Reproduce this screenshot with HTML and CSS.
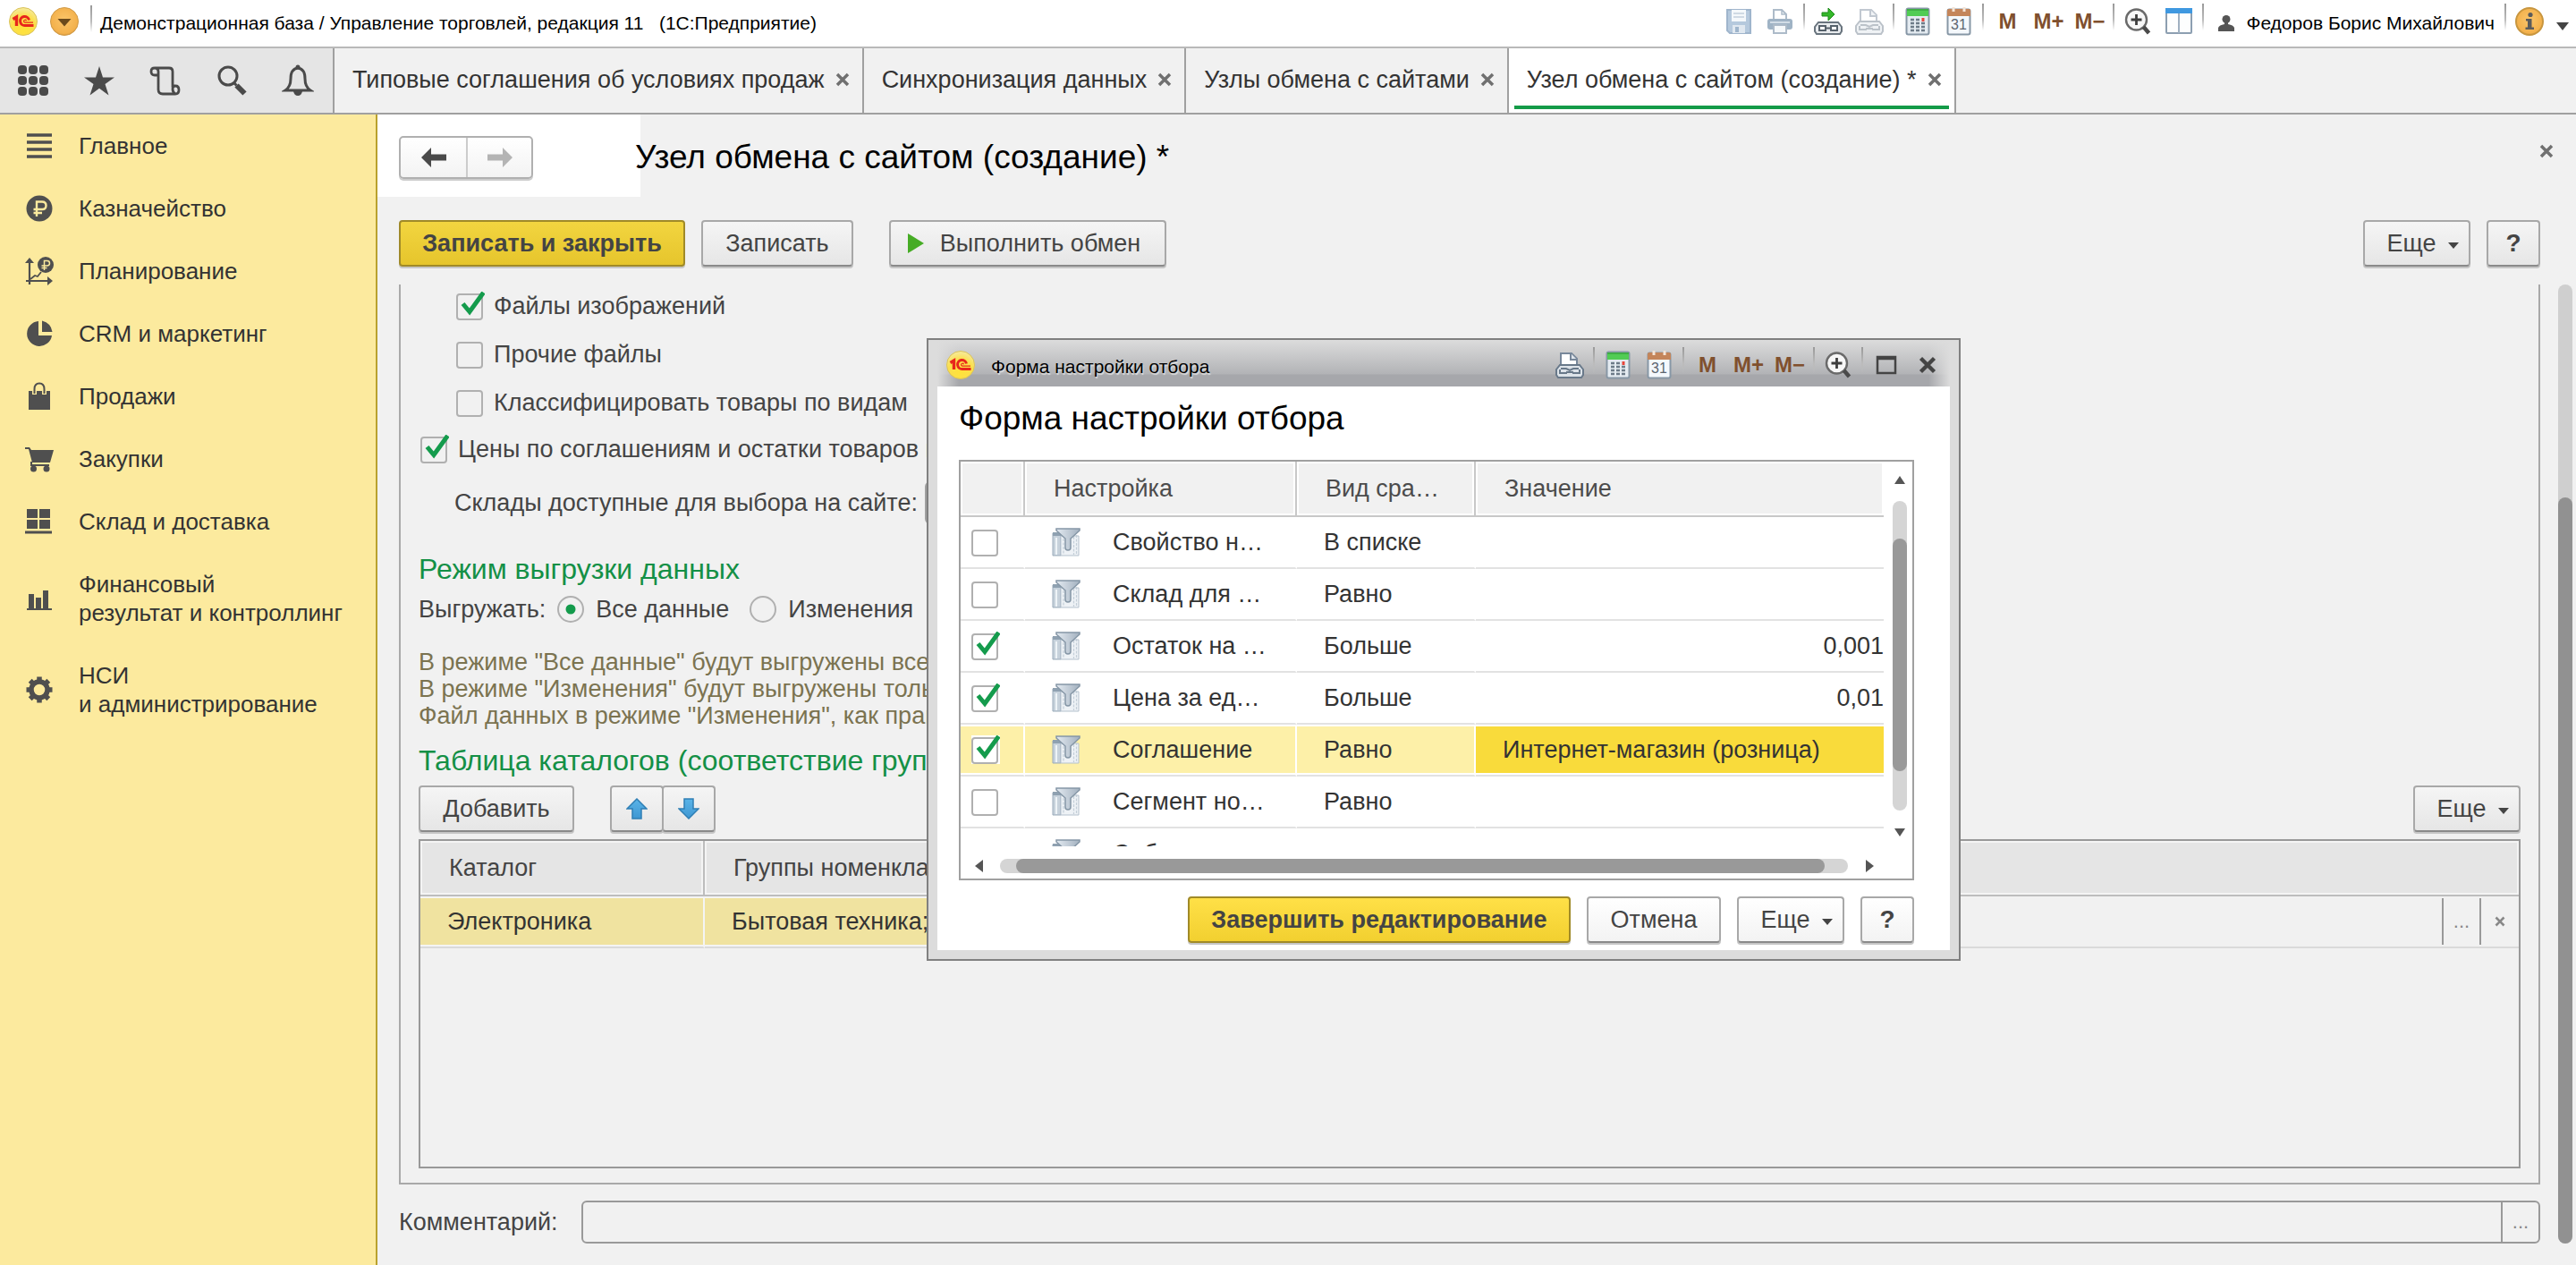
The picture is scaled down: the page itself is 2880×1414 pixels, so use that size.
FILE: index.html
```html
<!DOCTYPE html>
<html lang="ru">
<head>
<meta charset="utf-8">
<title>Узел обмена с сайтом (создание)</title>
<link rel="stylesheet" href="styles.css">
</head>
<body>

<svg class="sprite" aria-hidden="true">
  <defs>
    <radialGradient id="gold" cx="50%" cy="75%" r="75%">
      <stop offset="0" stop-color="#ffe23a"/><stop offset=".6" stop-color="#fbdf4c"/><stop offset="1" stop-color="#f6eba0"/>
    </radialGradient>
    <radialGradient id="amber" cx="50%" cy="45%" r="60%">
      <stop offset="0" stop-color="#fbc56a"/><stop offset=".8" stop-color="#f3b14c"/><stop offset="1" stop-color="#c98d35"/>
    </radialGradient>
    <linearGradient id="steel" x1="0" x2="1"><stop offset="0" stop-color="#e3eaf1"/><stop offset="1" stop-color="#a3b1bf"/></linearGradient>
    <linearGradient id="sky" x1="0" x2="0" y1="0" y2="1"><stop offset="0" stop-color="#5ab4e8"/><stop offset="1" stop-color="#3f97d2"/></linearGradient>
  </defs>
  <symbol id="i-logo" viewBox="0 0 32 32">
    <circle cx="16" cy="16" r="15.5" fill="url(#gold)" stroke="#d9c25a"/>
    <path d="M4.500 13.500L8.500 11v10" fill="none" stroke="#e8261c" stroke-width="3.400"/>
    <path d="M22.500 14.500a5 5 0 1 0-4.500 6h9.500" fill="none" stroke="#e8261c" stroke-width="3"/>
    <path d="M19.500 15.200a1.500 1.500 0 1 0-1.500 2h9" fill="none" stroke="#e8261c" stroke-width="1.200"/>
  </symbol>
  <symbol id="i-drop" viewBox="0 0 32 32">
    <circle cx="16" cy="16" r="15.500" fill="url(#amber)" stroke="#cf9a48"/>
    <path d="M8.500 13h15L16 21.500z" fill="#6b4a1c"/>
  </symbol>
  <symbol id="i-info" viewBox="0 0 32 32">
    <circle cx="16" cy="16" r="15" fill="url(#amber)" stroke="#c8963f" stroke-width="2"/>
    <circle cx="17" cy="8.500" r="2.600" fill="#5b5b5b"/>
    <path d="M12 13h6.500v9.500h2.500V25h-9.500v-2.500H14v-7h-2z" fill="#5b5b5b"/>
  </symbol>
  <symbol id="i-save" viewBox="0 0 32 32">
    <path d="M3 3h26v26H6l-3-3z" fill="#a9c0d8" stroke="#8fa9c4" stroke-width="2"/>
    <path d="M8 3h16v13H8z" fill="#f3f7fb"/><path d="M10 7h12M10 11h12" stroke="#b9c9d8" stroke-width="1.500"/>
    <path d="M9 20h14v9H9z" fill="#dbe5ee"/><path d="M12 22h4v6h-4z" fill="#8fa9c4"/>
  </symbol>
  <symbol id="i-print" viewBox="0 0 32 32">
    <path d="M9 14V3h9l5 5v6" fill="#fff" stroke="#9fb0c0" stroke-width="2"/><path d="M18 3v5h5" fill="none" stroke="#9fb0c0" stroke-width="1.500"/>
    <rect x="2" y="13" width="28" height="12" rx="3" fill="#8fa6bb"/><path d="M5 17h22" stroke="#c9d6e2" stroke-width="2"/>
    <path d="M9 20h14v9H9z" fill="#f5f8fb" stroke="#9fb0c0" stroke-width="2"/>
  </symbol>
  <symbol id="i-golink" viewBox="0 0 32 32">
    <path d="M9 6h7V1L23 8l-7 7v-5H9z" fill="#35b82a" stroke="#1d8a1a"/>
    <path d="M5 17h22l4 5v5l-2 3H3l-2-3v-5z" fill="#e8ebee" stroke="#69747e" stroke-width="2"/>
    <path d="M6 21h7v5H6zM19 21h7v5h-7zM12 23.500h8" fill="#fff" stroke="#56616b" stroke-width="2"/>
  </symbol>
  <symbol id="i-plink" viewBox="0 0 32 32">
    <path d="M6 17V3h12l6 6v8" fill="#fff" stroke="#77879a" stroke-width="2"/><path d="M17 3v7h7" fill="#dfe5ec" stroke="#77879a" stroke-width="2"/>
    <path d="M5 16h22l4 5v6l-2 3H3l-2-3v-6z" fill="#dde3e9" stroke="#69798a" stroke-width="2"/>
    <path d="M6 20h6l4 2 4-2h6M5 21v4h8M27 21v4h-8M12 24h8" fill="none" stroke="#69798a" stroke-width="2"/>
  </symbol>
  <symbol id="i-calc" viewBox="0 0 32 32">
    <rect x="3.500" y="1.500" width="25" height="29" rx="2" fill="#e4ebf1" stroke="#8797a6" stroke-width="2"/>
    <path d="M4 2h24v8H4z" fill="#51cc54"/><path d="M4 2h24v2H4z" fill="#3fae46"/>
    <path d="M8 14h4M14 14h4M8 18h4M14 18h4M20 18h4M8 22h4M14 22h4M20 22h4M8 26h4M14 26h4M20 26h4" stroke="#6d7b88" stroke-width="2.400"/>
    <path d="M22 12v4" stroke="#e8453c" stroke-width="3"/>
  </symbol>
  <symbol id="i-cal" viewBox="0 0 32 32">
    <rect x="3.500" y="2.500" width="25" height="28" rx="2" fill="#f4f8fc" stroke="#8797a6" stroke-width="2"/>
    <path d="M3 4q0-2 2-2h22q2 0 2 2v6H3z" fill="#c4855a"/><path d="M10 0v5M22 0v5" stroke="#f4e4d6" stroke-width="3"/>
    <text x="16" y="25" font-size="16" text-anchor="middle" fill="#5c6670">31</text>
  </symbol>
  <symbol id="i-zoom" viewBox="0 0 32 32">
    <circle cx="14.500" cy="14" r="11.500" fill="#f7f7f7" stroke="#6a6a6a" stroke-width="2.400"/>
    <path d="M14.500 8v12M8.500 14h12" stroke="#3d3d3d" stroke-width="2.800"/><path d="M22.500 22l6 7" stroke="#4a4a4a" stroke-width="4.500"/>
  </symbol>
  <symbol id="i-panes" viewBox="0 0 32 32">
    <rect x="2" y="2" width="28" height="27" rx="1" fill="#fdfefe" stroke="#8d9fb1" stroke-width="2"/>
    <path d="M1 1h30v6H1z" fill="#3f98e0"/><path d="M16 7v22" stroke="#9fb0c0" stroke-width="2"/>
  </symbol>
  <symbol id="i-user" viewBox="0 0 20 20">
    <circle cx="10" cy="5.500" r="4.500" fill="#555"/><path d="M8 8h4v3q6 1 7 4v4H1v-4q1-3 7-4z" fill="#555"/>
  </symbol>
  <symbol id="i-max" viewBox="0 0 24 24"><path d="M2 3h20v18H2zM2 5h20" fill="none" stroke="#444" stroke-width="2.500"/></symbol>
  <symbol id="i-x" viewBox="0 0 16 16"><path d="M2 2l12 12M14 2L2 14" stroke="currentColor" stroke-width="3.500" fill="none"/></symbol>

  <symbol id="i-grid" viewBox="0 0 36 36">
    <g fill="#4a4a4a"><rect x="1" y="1" width="10" height="10" rx="4"/><rect x="13" y="1" width="10" height="10" rx="4"/><rect x="25" y="1" width="10" height="10" rx="4"/><rect x="1" y="13" width="10" height="10" rx="4"/><rect x="13" y="13" width="10" height="10" rx="4"/><rect x="25" y="13" width="10" height="10" rx="4"/><rect x="1" y="25" width="10" height="10" rx="4"/><rect x="13" y="25" width="10" height="10" rx="4"/><rect x="25" y="25" width="10" height="10" rx="4"/></g>
  </symbol>
  <symbol id="i-star" viewBox="0 0 36 36"><path d="M18 2l4 12.500h13l-10.500 7.500 4 12.500L18 26.800 7.500 34.500l4-12.500L1 14.500h13z" fill="#4a4a4a"/></symbol>
  <symbol id="i-scroll" viewBox="0 0 36 36">
    <path d="M6 4h16q4 0 4 4v16h3q4 0 4 4.500T29 33H15q-5 0-5-5V12H6q-4 0-4-4t4-4q4 0 4 4v4M29 24q-3 0-3 3.500t3 5.500" fill="none" stroke="#4a4a4a" stroke-width="2.800"/>
  </symbol>
  <symbol id="i-search" viewBox="0 0 36 36">
    <circle cx="14" cy="13" r="10" fill="none" stroke="#4a4a4a" stroke-width="3"/><path d="M20.500 20.500l3 3" stroke="#4a4a4a" stroke-width="3"/><path d="M23.500 23.500l9 9" stroke="#4a4a4a" stroke-width="6"/>
  </symbol>
  <symbol id="i-bell" viewBox="0 0 36 36">
    <path d="M18 4q-8 1-8 12 0 9-6 13h28q-6-4-6-13 0-11-8-12z" fill="none" stroke="#4a4a4a" stroke-width="3"/><circle cx="18" cy="3" r="2.500" fill="#4a4a4a"/><path d="M13 30h10q-1 5-5 5t-5-5z" fill="#4a4a4a"/>
  </symbol>

  <symbol id="n-main" viewBox="0 0 32 32"><path d="M2 4h28M2 12h28M2 20h28M2 28h28" stroke="#4f4f4f" stroke-width="3.500"/></symbol>
  <symbol id="n-rub" viewBox="0 0 32 32">
    <circle cx="16" cy="16" r="14.500" fill="#4f4f4f"/>
    <path d="M13 25V8.500h6q4.500 0 4.500 4.300T19 17H9.500M9.500 21H19" fill="none" stroke="#fcea9e" stroke-width="2.400"/>
  </symbol>
  <symbol id="n-plan" viewBox="0 0 32 32">
    <path d="M5 31V4M1 27h27" stroke="#4f4f4f" stroke-width="2.200" fill="none"/><path d="M0 7l5-6 5 6zM25 22l6 5-6 5z" fill="#4f4f4f"/>
    <path d="M6 25l5-4 3 1 4-5" stroke="#4f4f4f" stroke-width="1.800" fill="none"/>
    <circle cx="23" cy="9" r="9" fill="#4f4f4f"/><path d="M21.500 15V4.500h3q3 0 3 2.700t-3 2.700h-6M18.500 12.500h6" fill="none" stroke="#fcea9e" stroke-width="1.500"/>
  </symbol>
  <symbol id="n-crm" viewBox="0 0 32 32">
    <path d="M15 2A14 14 0 1 0 30 18H15z" fill="#4f4f4f"/><path d="M19 1.500V14h11.500Q29 4 19 1.500z" fill="#4f4f4f"/>
  </symbol>
  <symbol id="n-bag" viewBox="0 0 32 32"><path d="M4 10h24v21H4z" fill="#4f4f4f"/><path d="M10.500 14V8q0-6 5.500-6t5.500 6v6" fill="none" stroke="#fcea9e" stroke-width="5"/><path d="M10.500 13V8q0-6.500 5.500-6.500T21.500 8v5" fill="none" stroke="#4f4f4f" stroke-width="2"/></symbol>
  <symbol id="n-cart" viewBox="0 0 32 32"><path d="M0 3h5l2 3h25l-4 14H8L4 5H0z" fill="#4f4f4f"/><path d="M7 19v4h20" stroke="#4f4f4f" stroke-width="2" fill="none"/><circle cx="9.500" cy="27" r="3.500" fill="#4f4f4f"/><circle cx="24" cy="27" r="3.500" fill="#4f4f4f"/></symbol>
  <symbol id="n-box" viewBox="0 0 32 32"><path d="M2 2h12v10H2zM16 2h12v10H16zM2 14h12v10H2zM16 14h12v10H16zM0 26.500h30v3H0z" fill="#4f4f4f"/></symbol>
  <symbol id="n-bars" viewBox="0 0 32 32"><path d="M4 11h6v16H4zM12 15h6v12h-6zM20 7h6v20h-6zM2 27h28v2H2z" fill="#4f4f4f"/></symbol>
  <symbol id="n-gear" viewBox="0 0 32 32">
    <circle cx="16" cy="16" r="9" fill="none" stroke="#4f4f4f" stroke-width="5.500"/>
    <path d="M16 1.500v6M16 24.500v6M1.500 16h6M24.500 16h6M5.700 5.700l4 4M22.300 22.300l4 4M5.700 26.300l4-4M22.300 9.700l4-4" stroke="#4f4f4f" stroke-width="5.500"/>
  </symbol>

  <symbol id="i-back" viewBox="0 0 28 24"><path d="M0 12L11 1v7.500h17v7H11V23z" fill="currentColor"/></symbol>
  <symbol id="i-fwd" viewBox="0 0 28 24"><path d="M28 12L17 1v7.500H0v7h17V23z" fill="currentColor"/></symbol>
  <symbol id="i-up" viewBox="0 0 24 24"><path d="M12 1l11 11h-6v11H7V12H1z" fill="url(#sky)" stroke="#2f7fb5" stroke-width="1.500"/></symbol>
  <symbol id="i-down" viewBox="0 0 24 24"><path d="M12 23L1 12h6V1h10v11h6z" fill="url(#sky)" stroke="#2f7fb5" stroke-width="1.500"/></symbol>
  <symbol id="i-filter" viewBox="0 0 32 32">
    <path d="M1 6h9v25H1z" fill="#c7d2dc" stroke="#9aabba"/><path d="M1 5h9v4H1z" fill="#8fa1b1"/>
    <path d="M10 9h20v22H10z" fill="#eef2f6" stroke="#b4c1cd"/><path d="M13 12v18M24.500 10v20M27.500 8v22" stroke="#c3ced8" stroke-width="1.200" stroke-dasharray="3 1.500"/><path d="M5 11v19" stroke="#eef3f7" stroke-width="2"/>
    <path d="M5 1h26v2L21 12v10q0 3-3 3t-3-3V12L5 3z" fill="url(#steel)" stroke="#8596a6" stroke-width="1.500"/>
  </symbol>
</svg>

<header class="titlebar">
  <div class="titlebar-left">
    <svg class="ico32 lift"><use href="#i-logo"/></svg>
    <svg class="ico32 lift"><use href="#i-drop"/></svg>
    <i class="sep"></i>
    <span>Демонстрационная база / Управление торговлей, редакция 11 &nbsp; (1С:Предприятие)</span>
  </div>
  <div class="iconbar">
    <button class="tool" aria-label="Сохранить"><svg class="ico32 faded"><use href="#i-save"/></svg></button>
    <button class="tool" aria-label="Печать"><svg class="ico32 faded"><use href="#i-print"/></svg></button>
    <i class="sep"></i>
    <button class="tool" aria-label="Перейти по ссылке"><svg class="ico32"><use href="#i-golink"/></svg></button>
    <button class="tool" aria-label="Получить ссылку"><svg class="ico32 dim"><use href="#i-plink"/></svg></button>
    <i class="sep"></i>
    <button class="tool" aria-label="Калькулятор"><svg class="ico32"><use href="#i-calc"/></svg></button>
    <button class="tool" aria-label="Календарь"><svg class="ico32"><use href="#i-cal"/></svg></button>
    <i class="sep"></i>
    <button class="tool mem">M</button>
    <button class="tool mem">M+</button>
    <button class="tool mem">M−</button>
    <i class="sep"></i>
    <button class="tool" aria-label="Масштаб"><svg class="ico32"><use href="#i-zoom"/></svg></button>
    <button class="tool" aria-label="Панели"><svg class="ico32"><use href="#i-panes"/></svg></button>
    <i class="sep"></i>
  </div>
  <a class="user" href="#"><svg class="ico20"><use href="#i-user"/></svg>Федоров Борис Михайлович</a>
  <div class="iconbar about">
    <i class="sep"></i>
    <button class="tool" aria-label="О программе"><svg class="ico32"><use href="#i-info"/></svg></button>
    <button class="menu-arrow" aria-label="Меню"><i class="tri"></i></button>
  </div>
</header>

<nav class="tabbar">
  <div class="tabtools">
    <button class="tabtool" aria-label="Меню функций"><svg class="ico36"><use href="#i-grid"/></svg></button>
    <button class="tabtool" aria-label="Избранное"><svg class="ico36"><use href="#i-star"/></svg></button>
    <button class="tabtool" aria-label="История"><svg class="ico36"><use href="#i-scroll"/></svg></button>
    <button class="tabtool" aria-label="Поиск"><svg class="ico36"><use href="#i-search"/></svg></button>
    <button class="tabtool" aria-label="Оповещения"><svg class="ico36"><use href="#i-bell"/></svg></button>
  </div>
  <div class="tab"><a href="#">Типовые соглашения об условиях продаж</a><button class="close" aria-label="Закрыть"><svg class="ico16"><use href="#i-x"/></svg></button></div>
  <div class="tab"><a href="#">Синхронизация данных</a><button class="close" aria-label="Закрыть"><svg class="ico16"><use href="#i-x"/></svg></button></div>
  <div class="tab"><a href="#">Узлы обмена с сайтами</a><button class="close" aria-label="Закрыть"><svg class="ico16"><use href="#i-x"/></svg></button></div>
  <div class="tab active"><a href="#">Узел обмена с сайтом (создание) *</a><button class="close" aria-label="Закрыть"><svg class="ico16"><use href="#i-x"/></svg></button></div>
</nav>

<div class="shell">
  <nav class="sidebar">
    <a href="#"><svg class="ico32"><use href="#n-main"/></svg><span>Главное</span></a>
    <a href="#"><svg class="ico32"><use href="#n-rub"/></svg><span>Казначейство</span></a>
    <a href="#"><svg class="ico32"><use href="#n-plan"/></svg><span>Планирование</span></a>
    <a href="#"><svg class="ico32"><use href="#n-crm"/></svg><span>CRM и маркетинг</span></a>
    <a href="#"><svg class="ico32"><use href="#n-bag"/></svg><span>Продажи</span></a>
    <a href="#"><svg class="ico32"><use href="#n-cart"/></svg><span>Закупки</span></a>
    <a href="#"><svg class="ico32"><use href="#n-box"/></svg><span>Склад и доставка</span></a>
    <a href="#"><svg class="ico32"><use href="#n-bars"/></svg><span>Финансовый<br>результат и контроллинг</span></a>
    <a href="#"><svg class="ico32"><use href="#n-gear"/></svg><span>НСИ<br>и администрирование</span></a>
  </nav>

  <main class="workspace">
    <div class="form-head">
      <div class="history">
        <button aria-label="Назад"><svg class="arrow"><use href="#i-back"/></svg></button>
        <button aria-label="Вперед" disabled><svg class="arrow"><use href="#i-fwd"/></svg></button>
      </div>
      <h1>Узел обмена с сайтом (создание) *</h1>
      <button class="close form-close" aria-label="Закрыть форму"><svg class="ico16"><use href="#i-x"/></svg></button>
    </div>

    <div class="commands">
      <button class="btn primary">Записать и закрыть</button>
      <button class="btn">Записать</button>
      <button class="btn run"><i class="play"></i>Выполнить обмен</button>
      <button class="btn more">Еще <i class="tri"></i></button>
      <button class="btn help">?</button>
    </div>

    <div class="form-body">
      <div class="form-column">
        <section class="panel">
          <div class="nested">
            <label class="check"><input type="checkbox" checked>Файлы изображений</label>
            <label class="check"><input type="checkbox">Прочие файлы</label>
            <label class="check"><input type="checkbox">Классифицировать товары по видам</label>
          </div>
          <label class="check prices"><input type="checkbox" checked>Цены по соглашениям и остатки товаров на складах</label>
          <div class="stores">
            <label for="stores">Склады доступные для выбора на сайте:</label>
            <input id="stores" class="field" type="text">
          </div>

          <h2 class="mode-title">Режим выгрузки данных</h2>
          <div class="mode" role="radiogroup" aria-label="Выгружать">
            <span>Выгружать:</span>
            <label class="radio"><input type="radio" name="mode" checked>Все данные</label>
            <label class="radio"><input type="radio" name="mode">Изменения</label>
          </div>
          <p class="note">В режиме "Все данные" будут выгружены все данные<br>В режиме "Изменения" будут выгружены только<br>Файл данных в режиме "Изменения", как правило</p>

          <h2>Таблица каталогов (соответствие групп)</h2>
          <div class="grid-commands">
            <button class="btn add">Добавить</button>
            <div class="pair">
              <button class="btn" aria-label="Вверх"><svg class="ico24"><use href="#i-up"/></svg></button>
              <button class="btn" aria-label="Вниз"><svg class="ico24"><use href="#i-down"/></svg></button>
            </div>
            <button class="btn more">Еще <i class="tri"></i></button>
          </div>
          <div class="catalogs">
            <table>
              <colgroup><col class="c-name"><col class="c-groups"><col></colgroup>
              <thead><tr><th>Каталог</th><th colspan="2">Группы номенклатуры</th></tr></thead>
              <tbody><tr>
                <td class="lit">Электроника</td>
                <td class="lit">Бытовая техника;</td>
                <td class="actions"><div><button>...</button><button class="close" aria-label="Очистить"><svg class="ico12"><use href="#i-x"/></svg></button></div></td>
              </tr></tbody>
            </table>
          </div>
        </section>

        <div class="comment">
          <label for="comment">Комментарий:</label>
          <div class="picker"><input id="comment" type="text"><button>...</button></div>
        </div>
      </div>
      <div class="page-scroll"><i></i></div>
    </div>
  </main>
</div>

<section class="dialog" role="dialog" aria-labelledby="dialog-title">
  <header class="dialog-bar">
    <svg class="ico32"><use href="#i-logo"/></svg>
    <span>Форма настройки отбора</span>
    <div class="iconbar">
      <button class="tool" aria-label="Получить ссылку"><svg class="ico32"><use href="#i-plink"/></svg></button>
      <i class="sep"></i>
      <button class="tool" aria-label="Калькулятор"><svg class="ico32"><use href="#i-calc"/></svg></button>
      <button class="tool" aria-label="Календарь"><svg class="ico32"><use href="#i-cal"/></svg></button>
      <i class="sep"></i>
      <button class="tool mem">M</button>
      <button class="tool mem">M+</button>
      <button class="tool mem">M−</button>
      <i class="sep"></i>
      <button class="tool" aria-label="Масштаб"><svg class="ico32"><use href="#i-zoom"/></svg></button>
      <i class="sep"></i>
      <button class="tool" aria-label="Развернуть"><svg class="ico24"><use href="#i-max"/></svg></button>
      <button class="tool dark" aria-label="Закрыть"><svg class="ico20"><use href="#i-x"/></svg></button>
    </div>
  </header>
  <div class="dialog-body">
    <h1 id="dialog-title">Форма настройки отбора</h1>
    <div class="filter">
      <div class="filter-rows">
        <table>
          <colgroup><col class="f-use"><col class="f-name"><col class="f-kind"><col></colgroup>
          <thead><tr><th></th><th>Настройка</th><th>Вид сра…</th><th>Значение</th></tr></thead>
          <tbody>
            <tr><td><input type="checkbox" aria-label="Использовать"></td><td><div class="name"><svg class="ico32"><use href="#i-filter"/></svg>Свойство н…</div></td><td>В списке</td><td></td></tr>
            <tr><td><input type="checkbox" aria-label="Использовать"></td><td><div class="name"><svg class="ico32"><use href="#i-filter"/></svg>Склад для …</div></td><td>Равно</td><td></td></tr>
            <tr><td><input type="checkbox" checked aria-label="Использовать"></td><td><div class="name"><svg class="ico32"><use href="#i-filter"/></svg>Остаток на …</div></td><td>Больше</td><td class="num">0,001</td></tr>
            <tr><td><input type="checkbox" checked aria-label="Использовать"></td><td><div class="name"><svg class="ico32"><use href="#i-filter"/></svg>Цена за ед…</div></td><td>Больше</td><td class="num">0,01</td></tr>
            <tr class="selected"><td><input type="checkbox" checked aria-label="Использовать"></td><td><div class="name"><svg class="ico32"><use href="#i-filter"/></svg>Соглашение</div></td><td>Равно</td><td class="current">Интернет-магазин (розница)</td></tr>
            <tr><td><input type="checkbox" aria-label="Использовать"></td><td><div class="name"><svg class="ico32"><use href="#i-filter"/></svg>Сегмент но…</div></td><td>Равно</td><td></td></tr>
            <tr><td></td><td><div class="name"><svg class="ico32"><use href="#i-filter"/></svg>Соб</div></td><td></td><td></td></tr>
          </tbody>
        </table>
      </div>
      <div class="vbar"><button aria-label="Вверх"><i class="tri up"></i></button><div class="track"><i></i></div><button aria-label="Вниз"><i class="tri down"></i></button></div>
      <div class="hbar"><button aria-label="Влево"><i class="tri left"></i></button><div class="track"><i></i></div><button aria-label="Вправо"><i class="tri right"></i></button></div>
    </div>
    <div class="dialog-actions">
      <button class="btn primary">Завершить редактирование</button>
      <button class="btn cancel">Отмена</button>
      <button class="btn more">Еще <i class="tri"></i></button>
      <button class="btn help">?</button>
    </div>
  </div>
</section>

</body>
</html>
```
FILE: styles.css
```css
* { box-sizing: border-box; }

body {
  margin: 0;
  min-height: 100vh;
  display: flex;
  flex-direction: column;
  position: relative;
  background: #f1f1f1;
  color: #444;
  font: 27px/32px "Liberation Sans", Arial, sans-serif;
}

button, input { font: inherit; color: inherit; margin: 0; }
button { padding: 0; border: 0; background: none; }
a { color: inherit; text-decoration: none; }
h1, h2, p { margin: 0; font-weight: normal; }
h1 { font-size: 37px; line-height: 48px; color: #000; white-space: nowrap; }
h2 { font-size: 32px; line-height: 36px; color: #149046; white-space: nowrap; }
svg { display: block; flex: none; }
table { width: 100%; border-spacing: 0; table-layout: fixed; }
th { font-weight: normal; text-align: left; }

.sprite { position: absolute; width: 0; height: 0; }
.ico12 { width: 12px; height: 12px; }
.ico16 { width: 16px; height: 16px; }
.ico20 { width: 20px; height: 20px; }
.ico24 { width: 24px; height: 24px; }
.ico32 { width: 32px; height: 32px; }
.ico36 { width: 36px; height: 36px; }
.faded { opacity: .85; }
.dim { opacity: .45; }

/* Application title bar */
.titlebar {
  display: flex;
  align-items: center;
  height: 54px;
  border-bottom: 2px solid #b9b9b9;
  background: #fff;
  color: #000;
  font-size: 21px;
}
.titlebar-left { flex: 1; display: flex; align-items: center; gap: 14px; padding-left: 10px; white-space: nowrap; }
.titlebar-left .sep { margin-left: -4px; margin-right: -8px; }
.lift { margin-bottom: 4px; }
.iconbar { display: flex; align-items: center; margin-bottom: 4px; }
.tool { width: 46px; height: 40px; display: flex; align-items: center; justify-content: center; }
.sep { width: 8px; height: 30px; margin-bottom: 10px; background: linear-gradient(#999, #bbb 60%, transparent) center / 2px 100% no-repeat; }
.mem { color: #80502e; font-weight: bold; font-size: 24px; }
.user { display: flex; align-items: center; gap: 12px; padding: 0 8px 0 12px; white-space: nowrap; }
.menu-arrow { width: 28px; height: 32px; padding-top: 10px; display: flex; align-items: center; justify-content: center; }
.tri { flex: none; width: 0; height: 0; border: 6px solid transparent; border-top: 7px solid #444; border-bottom: 0; }
.menu-arrow .tri { border-width: 9px 7px 0; }
.about { padding-right: 1px; }

/* Open windows */
.tabbar { display: flex; height: 74px; border-bottom: 2px solid #a0a0a0; background: #f1f1f1; color: #333; }
.tabtools { display: flex; padding-right: 2px; background: #e5e5e5; border-right: 2px solid #a0a0a0; }
.tabtool { width: 74px; display: flex; align-items: center; justify-content: center; }
.tab { display: flex; align-items: center; gap: 12px; padding: 0 14px 2px 20px; border-right: 2px solid #a0a0a0; white-space: nowrap; }
.tab.active { background: linear-gradient(#149b48, #149b48) 6px 64px / calc(100% - 12px) 4px no-repeat #fff; }
.close { color: #707070; }

/* Sections */
.shell { flex: 1; display: flex; }
.sidebar { flex: none; width: 422px; background: #fcea9e; border-right: 2px solid #b9a12e; color: #333; font-size: 26px; }
.sidebar a { display: flex; align-items: center; gap: 28px; padding: 19px 0 19px 28px; white-space: nowrap; }

/* Form */
.workspace { flex: 1; min-width: 0; display: flex; flex-direction: column; }
.form-head {
  display: flex;
  align-items: center;
  gap: 114px;
  padding: 24px 24px 20px;
  background: linear-gradient(#fff, #fff) 0 0 / 294px 100% no-repeat;
}
.form-close { margin: 0 -8px 14px auto; width: 34px; display: flex; justify-content: center; }
.history { display: flex; border: 2px solid #b0b0b0; border-radius: 5px; box-shadow: 0 2px 0 #ccc; background: linear-gradient(#fff, #f3f3f3); }
.history button { width: 73px; height: 44px; display: flex; align-items: center; justify-content: center; color: #4a4a4a; }
.history button + button { border-left: 2px solid #ccc; color: #b4b4b4; }
.arrow { width: 28px; height: 24px; }

.btn {
  display: flex;
  align-items: center;
  justify-content: center;
  height: 52px;
  border: 2px solid #a8a8a8;
  border-bottom-color: #8a8a8a;
  border-radius: 4px;
  background: linear-gradient(#f5f5f5, #e6e6e6);
  box-shadow: 0 2px 0 #c6c6c6;
  color: #444;
  white-space: nowrap;
}
.btn.primary {
  border-color: #a08a28;
  background: linear-gradient(#f2d540, #e6c52c);
  font-weight: bold;
}
.btn.more { width: 120px; gap: 14px; padding-left: 14px; }
.btn .tri { margin-top: 4px; }
.btn.help { width: 60px; font-weight: bold; font-size: 28px; }
.commands { display: flex; gap: 18px; padding: 26px 40px 20px 24px; }
.commands .primary { width: 320px; }
.commands .btn:nth-child(2) { width: 170px; }
.commands .run { width: 310px; margin-left: 22px; padding-right: 8px; gap: 18px; }
.commands .more { margin-left: auto; }
.play { border: 11px solid transparent; border-left: 18px solid #46ac25; border-right: 0; }

.form-body { flex: 1; display: flex; gap: 20px; padding: 0 4px 24px 24px; }
.form-column { flex: 1; min-width: 0; display: flex; flex-direction: column; }
.page-scroll { width: 16px; border-radius: 8px; background: #cfcfcf; padding-top: 238px; }
.page-scroll i { display: block; height: 100%; border-radius: 8px; background: #919191; }

.panel { flex: 1; display: flex; flex-direction: column; padding: 8px 20px 16px; border: solid #a9a9a9; border-width: 0 2px 2px; }
.nested { display: flex; flex-direction: column; gap: 22px; padding-left: 42px; }
.check, .radio { display: flex; align-items: center; gap: 10px; white-space: nowrap; }
.prices { margin-top: 20px; padding-left: 2px; }

input[type="checkbox"], input[type="radio"] { appearance: none; flex: none; display: block; width: 32px; height: 32px; background: center / 32px 32px no-repeat; }
input[type="checkbox"] { background-image: url("data:image/svg+xml,%3Csvg xmlns='http://www.w3.org/2000/svg' viewBox='0 0 32 32'%3E%3Crect x='1' y='3' width='28' height='28' rx='3' fill='none' stroke='%23b0b0b0' stroke-width='2'/%3E%3C/svg%3E"); }
input[type="checkbox"]:checked { background-image: url("data:image/svg+xml,%3Csvg xmlns='http://www.w3.org/2000/svg' viewBox='0 0 32 32'%3E%3Crect x='1' y='3' width='28' height='28' rx='3' fill='none' stroke='%23b0b0b0' stroke-width='2'/%3E%3Cpath d='M7.500 13.500l7.500 9L30.500 1' fill='none' stroke='%23149b4c' stroke-width='5'/%3E%3C/svg%3E"); }
input[type="radio"] { background-image: url("data:image/svg+xml,%3Csvg xmlns='http://www.w3.org/2000/svg' viewBox='0 0 32 32'%3E%3Ccircle cx='16' cy='16' r='14' fill='none' stroke='%23b0b0b0' stroke-width='2'/%3E%3C/svg%3E"); }
input[type="radio"]:checked { background-image: url("data:image/svg+xml,%3Csvg xmlns='http://www.w3.org/2000/svg' viewBox='0 0 32 32'%3E%3Ccircle cx='16' cy='16' r='14' fill='none' stroke='%23b0b0b0' stroke-width='2'/%3E%3Ccircle cx='16' cy='16' r='5.500' fill='%23149b4c'/%3E%3C/svg%3E"); }

.stores { display: flex; align-items: center; gap: 8px; margin: 20px 0 32px; padding-left: 40px; white-space: nowrap; }
.field { width: 600px; height: 48px; border: 2px solid #a0a0a0; border-radius: 6px; background: none; }
.mode { display: flex; align-items: center; margin: 11px 0 28px; }
.radio { margin-left: 12px; gap: 12px; }
.radio + .radio { margin-left: 22px; }
.note { margin-bottom: 17px; color: #7b7350; line-height: 30px; white-space: nowrap; }
.grid-commands { display: flex; margin: 10px 0 8px; }
.add { width: 174px; margin-right: 40px; }
.pair { display: flex; }
.pair .btn { width: 60px; }
.pair .btn + .btn { margin-left: -2px; }
.grid-commands .more { margin-left: auto; }

.catalogs { flex: 1; border: 2px solid #999; }
.c-name { width: 318px; }
.c-groups { width: 1260px; }
.catalogs th { height: 62px; padding: 0 32px; border-right: 2px solid #bdbdbd; border-bottom: 2px solid #bdbdbd; background: #e5e5e5; box-shadow: inset 0 0 0 2px #f4f4f4; }
.catalogs th:last-child { border-right: 0; }
.catalogs td { height: 58px; padding: 0 30px; border-right: 2px solid #f4f4f4; border-bottom: 2px solid #dadada; color: #333; }
.catalogs .lit { background: #f0e3a0; box-shadow: inset 0 2px #f4f4f4, inset 0 -2px #f4f4f4; }
.catalogs .actions { padding: 0; border-right: 0; }
.actions div { display: flex; justify-content: flex-end; }
.actions button { width: 42px; height: 52px; border-left: 2px solid #999; font-size: 22px; color: #888; display: flex; align-items: center; justify-content: center; }
.actions button + button { width: 44px; }

.comment { display: flex; align-items: center; margin-top: 18px; gap: 28px; }
.comment label { width: 176px; }
.picker { flex: 1; display: flex; height: 48px; border: 2px solid #999; border-radius: 6px; }
.picker input { flex: 1; min-width: 0; border: 0; padding: 0 12px; background: none; }
.picker button { width: 42px; border-left: 2px solid #999; font-size: 22px; color: #888; }

/* Dialog window floating over the form */
.dialog { position: absolute; left: 1036px; top: 378px; width: 1156px; padding: 0 10px 10px; border: 2px solid #808080; background: #dcdcdc; }
.dialog-bar {
  display: flex;
  align-items: center;
  height: 52px;
  padding: 4px 2px 0 10px;
  background:
    linear-gradient(90deg, #dcdcdc, transparent 24px calc(100% - 24px), #dcdcdc),
    linear-gradient(#dcdcdc, #b2b3b6 38px, #a6a7ab 39px);
  color: #000;
  font-size: 21px;
}
.dialog-bar span { flex: 1; margin: 4px 0 0 18px; text-shadow: 1px 2px 1px #ddd; }
.dialog-bar .iconbar { margin: 0; }
.dark { color: #444; }
.dialog-body { padding: 24px 40px 8px 24px; background: #fff; }
.dialog h1 { height: 58px; line-height: 24px; }

.filter { display: grid; grid-template-columns: 1fr 32px; grid-template-rows: 430px 36px; border: 2px solid #a0a0a0; }
.filter-rows { overflow: hidden; }
.f-use { width: 72px; }
.f-name { width: 304px; }
.f-kind { width: 200px; }
.filter th { height: 62px; padding: 0 32px; border-right: 2px solid #c8c8c8; border-bottom: 2px solid #c8c8c8; background: #f1f1f1; box-shadow: inset 0 0 0 2px #fff; color: #4c4c4c; }
.filter th:last-child { border-right: 0; }
.filter td { height: 58px; padding: 0 0 0 30px; border-right: 2px solid #fff; border-bottom: 2px solid #e2e2e2; color: #333; white-space: nowrap; }
.filter td:first-child { padding-left: 12px; }
.filter td:last-child { border-right: 0; }
.name { display: flex; align-items: center; gap: 36px; }
.filter .num { text-align: right; }
.selected td { background: #fdf0a8; box-shadow: inset 0 2px #fff, inset 0 -2px #fff; }
.selected .current { background: #f9db3b; }
.filter td input { background-color: #fff; padding: 4px 4px 2px 2px; background-clip: border-box, content-box; }

.vbar { display: flex; flex-direction: column; align-items: center; gap: 8px; padding: 4px 0 0 4px; }
.hbar { display: flex; align-items: center; gap: 8px; padding: 8px 0 0 4px; }
.vbar button, .hbar button { width: 32px; height: 32px; display: flex; align-items: center; justify-content: center; }
.track { flex: 1; border-radius: 8px; background: #d5d5d5; }
.track i { display: block; border-radius: 8px; background: #999; }
.vbar .track { width: 16px; padding: 42px 0 44px; }
.vbar .track i { height: 100%; }
.hbar .track { height: 16px; padding: 0 26px 0 18px; }
.hbar .track i { height: 16px; }
.tri.up { border-top: 0; border-bottom: 9px solid #555; }
.tri.down { border-top: 9px solid #555; }
.tri.left { border: 7px solid transparent; border-right: 9px solid #555; border-left: 0; }
.tri.right { border: 7px solid transparent; border-left: 9px solid #555; border-right: 0; }

.dialog-actions { display: flex; justify-content: flex-end; gap: 18px; padding-top: 18px; }
.dialog-actions .btn { background: linear-gradient(#fff, #f3f3f3); }
.dialog-actions .primary { width: 428px; background: linear-gradient(#ffe047, #f2d030); }
.dialog-actions .cancel { width: 150px; }
```
